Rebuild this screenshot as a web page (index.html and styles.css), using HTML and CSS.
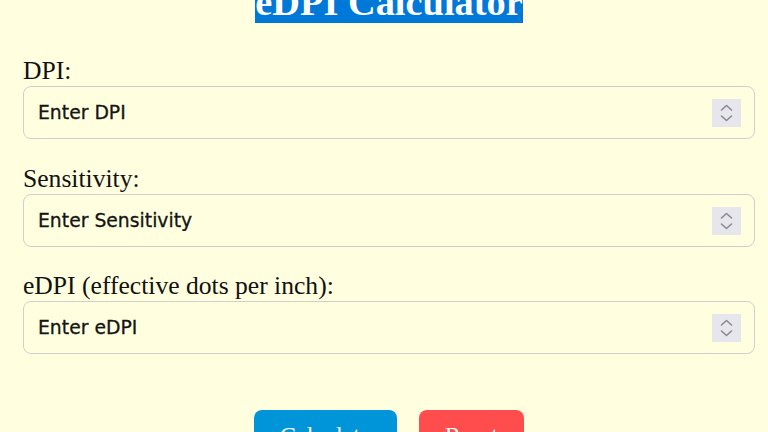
FILE: index.html
```html
<!DOCTYPE html>
<html lang="en">
<head>
<meta charset="utf-8">
<title>eDPI Calculator</title>
<link rel="stylesheet" href="styles.css">
</head>
<body>
<main class="calc">
  <h1 class="title"><span class="title-mark">eDPI Calculator</span></h1>
  <div class="group">
    <label class="label" for="dpi">DPI:</label>
    <div class="field">
      <input class="input" id="dpi" type="text" placeholder="Enter DPI">
      <span class="spin"><svg viewBox="0 0 29 28" width="29" height="28"><path d="M9.5 11 L14.5 6.5 L19.5 11 M9.5 17 L14.5 21.5 L19.5 17" fill="none" stroke="#8a8a96" stroke-width="1.6" stroke-linecap="round" stroke-linejoin="round"/></svg></span>
    </div>
  </div>
  <div class="group">
    <label class="label" for="sens">Sensitivity:</label>
    <div class="field">
      <input class="input" id="sens" type="text" placeholder="Enter Sensitivity">
      <span class="spin"><svg viewBox="0 0 29 28" width="29" height="28"><path d="M9.5 11 L14.5 6.5 L19.5 11 M9.5 17 L14.5 21.5 L19.5 17" fill="none" stroke="#8a8a96" stroke-width="1.6" stroke-linecap="round" stroke-linejoin="round"/></svg></span>
    </div>
  </div>
  <div class="group">
    <label class="label" for="edpi">eDPI (effective dots per inch):</label>
    <div class="field">
      <input class="input" id="edpi" type="text" placeholder="Enter eDPI">
      <span class="spin"><svg viewBox="0 0 29 28" width="29" height="28"><path d="M9.5 11 L14.5 6.5 L19.5 11 M9.5 17 L14.5 21.5 L19.5 17" fill="none" stroke="#8a8a96" stroke-width="1.6" stroke-linecap="round" stroke-linejoin="round"/></svg></span>
    </div>
  </div>
  <div class="actions">
    <button class="btn btn-calc" type="button">Calculate</button>
    <button class="btn btn-reset" type="button">Reset</button>
  </div>
</main>
</body>
</html>
```
FILE: styles.css
```css
html, body {
  margin: 0;
  padding: 0;
  background: #ffffe0;
  overflow: hidden;
}
body {
  font-family: "Liberation Serif", "Times New Roman", serif;
  color: #111;
}
.calc {
  margin: 0 13px 0 23px;
}
.title {
  margin: -20px 0 32px;
  text-align: center;
  font-size: 38.4px;
  font-weight: bold;
  line-height: normal;
}
.title-mark {
  background: #0078d7;
  color: #fff;
}
.group {
  margin-bottom: 24.6px;
}
.label {
  display: block;
  font-size: 25.6px;
  line-height: normal;
}
.field {
  position: relative;
}
.input {
  display: block;
  box-sizing: border-box;
  width: 100%;
  height: 53px;
  margin: 0;
  padding: 0 50px 0 14px;
  border: 1.5px solid #cfcfcf;
  border-radius: 8px;
  background: transparent;
  font-family: "DejaVu Sans", Verdana, sans-serif;
  font-size: 18.8px;
  color: #111;
  outline: none;
  -webkit-text-stroke: 0.3px #151515;
}
.input::placeholder {
  color: #151515;
  opacity: 1;
}
.spin {
  position: absolute;
  right: 14px;
  top: 13px;
  width: 29px;
  height: 28px;
  background: #e6e6ec;
  display: flex;
}
.actions {
  margin-top: 55.4px;
  display: flex;
  justify-content: center;
  gap: 22px;
}
.btn {
  font-family: "Liberation Serif", "Times New Roman", serif;
  font-size: 24px;
  line-height: normal;
  padding: 12px 26px;
  border: none;
  border-radius: 8px;
  color: #fff;
}
.btn-calc {
  background: #0095d9;
}
.btn-reset {
  background: #ff4c4c;
}
```
